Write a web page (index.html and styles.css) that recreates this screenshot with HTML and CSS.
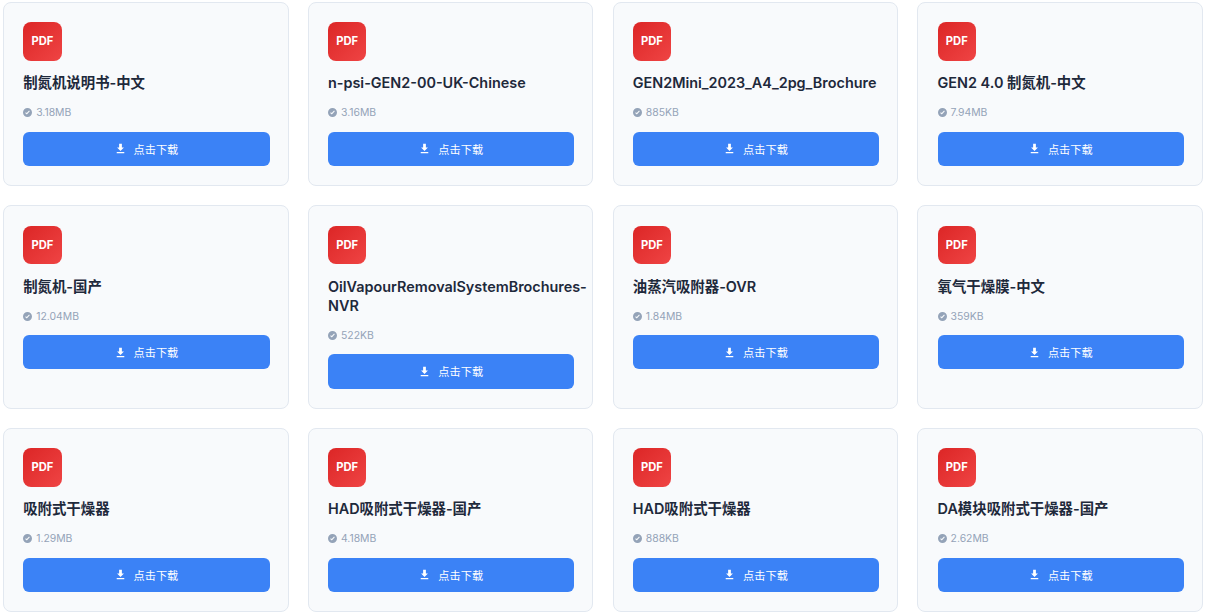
FILE: index.html
```html
<!DOCTYPE html>
<html lang="zh-CN">
<head>
    <meta charset="UTF-8">
    <title>资料下载</title>
    <link rel="stylesheet" href="styles.css">
</head>
<body>
    <svg class="defs" width="0" height="0">
        <symbol id="i-check" viewBox="0 0 16 16"><path d="M8 0a8 8 0 1 0 0 16A8 8 0 0 0 8 0zm4.100 5.900-4.900 5a.9.9 0 0 1-1.300 0L3.900 8.700l1.300-1.300 1.400 1.400 4.200-4.200z"/></symbol>
        <symbol id="i-download" viewBox="0 0 16 16"><path d="M6 1h4v5.500h3L8 11.500l-5-5h3zM2.500 13h11v2h-11z"/></symbol>
    </svg>
    <div class="file-grid">
        <div class="file-card">
            <div class="pdf-icon">PDF</div>
            <h3 class="file-name">制氮机说明书-中文</h3>
            <div class="file-size"><svg class="check"><use href="#i-check"/></svg>3.18MB</div>
            <a class="download-btn"><svg class="dl"><use href="#i-download"/></svg>点击下载</a>
        </div>
        <div class="file-card">
            <div class="pdf-icon">PDF</div>
            <h3 class="file-name">n-psi-GEN2-00-UK-Chinese</h3>
            <div class="file-size"><svg class="check"><use href="#i-check"/></svg>3.16MB</div>
            <a class="download-btn"><svg class="dl"><use href="#i-download"/></svg>点击下载</a>
        </div>
        <div class="file-card">
            <div class="pdf-icon">PDF</div>
            <h3 class="file-name">GEN2Mini_2023_A4_2pg_Brochure</h3>
            <div class="file-size"><svg class="check"><use href="#i-check"/></svg>885KB</div>
            <a class="download-btn"><svg class="dl"><use href="#i-download"/></svg>点击下载</a>
        </div>
        <div class="file-card">
            <div class="pdf-icon">PDF</div>
            <h3 class="file-name">GEN2 4.0 制氮机-中文</h3>
            <div class="file-size"><svg class="check"><use href="#i-check"/></svg>7.94MB</div>
            <a class="download-btn"><svg class="dl"><use href="#i-download"/></svg>点击下载</a>
        </div>
        <div class="file-card">
            <div class="pdf-icon">PDF</div>
            <h3 class="file-name">制氮机-国产</h3>
            <div class="file-size"><svg class="check"><use href="#i-check"/></svg>12.04MB</div>
            <a class="download-btn"><svg class="dl"><use href="#i-download"/></svg>点击下载</a>
        </div>
        <div class="file-card">
            <div class="pdf-icon">PDF</div>
            <h3 class="file-name">OilVapourRemovalSystemBrochures-NVR</h3>
            <div class="file-size"><svg class="check"><use href="#i-check"/></svg>522KB</div>
            <a class="download-btn"><svg class="dl"><use href="#i-download"/></svg>点击下载</a>
        </div>
        <div class="file-card">
            <div class="pdf-icon">PDF</div>
            <h3 class="file-name">油蒸汽吸附器-OVR</h3>
            <div class="file-size"><svg class="check"><use href="#i-check"/></svg>1.84MB</div>
            <a class="download-btn"><svg class="dl"><use href="#i-download"/></svg>点击下载</a>
        </div>
        <div class="file-card">
            <div class="pdf-icon">PDF</div>
            <h3 class="file-name">氧气干燥膜-中文</h3>
            <div class="file-size"><svg class="check"><use href="#i-check"/></svg>359KB</div>
            <a class="download-btn"><svg class="dl"><use href="#i-download"/></svg>点击下载</a>
        </div>
        <div class="file-card">
            <div class="pdf-icon">PDF</div>
            <h3 class="file-name">吸附式干燥器</h3>
            <div class="file-size"><svg class="check"><use href="#i-check"/></svg>1.29MB</div>
            <a class="download-btn"><svg class="dl"><use href="#i-download"/></svg>点击下载</a>
        </div>
        <div class="file-card">
            <div class="pdf-icon">PDF</div>
            <h3 class="file-name">HAD吸附式干燥器-国产</h3>
            <div class="file-size"><svg class="check"><use href="#i-check"/></svg>4.18MB</div>
            <a class="download-btn"><svg class="dl"><use href="#i-download"/></svg>点击下载</a>
        </div>
        <div class="file-card">
            <div class="pdf-icon">PDF</div>
            <h3 class="file-name">HAD吸附式干燥器</h3>
            <div class="file-size"><svg class="check"><use href="#i-check"/></svg>888KB</div>
            <a class="download-btn"><svg class="dl"><use href="#i-download"/></svg>点击下载</a>
        </div>
        <div class="file-card">
            <div class="pdf-icon">PDF</div>
            <h3 class="file-name">DA模块吸附式干燥器-国产</h3>
            <div class="file-size"><svg class="check"><use href="#i-check"/></svg>2.62MB</div>
            <a class="download-btn"><svg class="dl"><use href="#i-download"/></svg>点击下载</a>
        </div>
    </div>
</body>
</html>
```
FILE: styles.css
```css
body {
    margin: 0;
    padding: 2px 2px 0 3px;
    overflow: hidden;
    background: #fff;
    font-family: Inter, "Noto Sans CJK SC", sans-serif;
}
.defs {
    position: absolute;
}
.file-grid {
    display: grid;
    grid-template-columns: repeat(4, minmax(0, 1fr));
    gap: 19.2px;
}
.file-card {
    background: #f8fafc;
    border: 1px solid #e2e8f0;
    border-radius: 8px;
    padding: 19.2px 18px 19.2px 19.2px;
}
.pdf-icon {
    width: 38.4px;
    height: 38.4px;
    border-radius: 8px;
    background: linear-gradient(135deg, #dc2626, #ef4444);
    color: #fff;
    font-size: 11.2px;
    font-weight: 700;
    display: flex;
    align-items: center;
    justify-content: center;
    margin-bottom: 12.8px;
}
.file-name {
    margin: 0 0 12.7px;
    font-size: 14.4px;
    font-weight: 600;
    line-height: 19.2px;
    color: #1e293b;
}
.file-size {
    display: flex;
    align-items: center;
    font-size: 10.4px;
    line-height: 15px;
    color: #94a3b8;
    margin-bottom: 11.35px;
}
.check {
    width: 9px;
    height: 9px;
    margin-right: 4px;
    fill: #94a3b8;
}
.download-btn {
    display: flex;
    align-items: center;
    justify-content: center;
    height: 34.4px;
    background: #3b82f6;
    color: #fff;
    border-radius: 6px;
    font-size: 11.2px;
}
.dl {
    width: 11px;
    height: 11px;
    margin-right: 8px;
    fill: #fff;
}
```
